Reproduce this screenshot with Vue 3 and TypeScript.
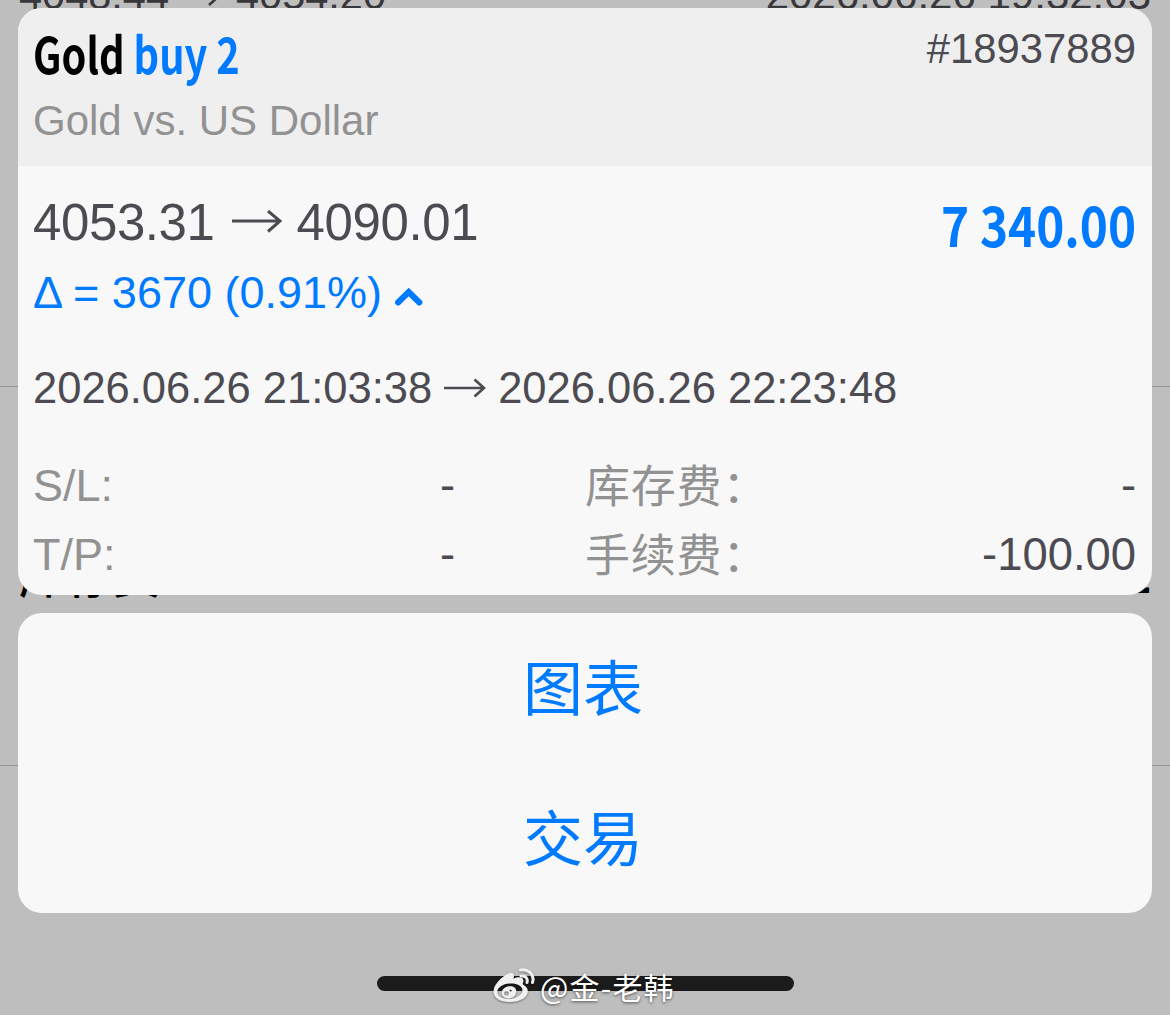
<script setup lang="ts">
interface DetailRow {
  label: string
  value: string
}

const details: DetailRow[] = [
  { label: 'S/L:', value: '-' },
  { label: '库存费：', value: '-' },
  { label: 'T/P:', value: '-' },
  { label: '手续费：', value: '-100.00' },
]

const actions: string[] = ['图表', '交易']
</script>

<template>
  <div class="screen">
    <div class="history" aria-hidden="true">
      <div class="past past-top">
        <span class="past-price">
          <span>4048.44</span>
          <svg class="past-arrow" width="40" height="22" viewBox="0 0 40 22">
            <path d="M0 13H37M28 5l9 8-9 8" />
          </svg>
          <span>4054.20</span>
        </span>
        <span class="past-date">2026.06.26 19:32:03</span>
      </div>
      <div class="divider first"></div>
      <div class="past past-fee">
        <span>库存费</span>
        <span class="past-dash">-</span>
      </div>
      <div class="divider second"></div>
    </div>

    <main class="sheet">
      <section class="card">
        <header class="head">
          <div>
            <div class="title">Gold <span class="side">buy 2</span></div>
            <div class="subtitle">Gold vs. US Dollar</div>
          </div>
          <div class="ticket">#18937889</div>
        </header>
        <div class="body">
          <div class="price-row">
            <div class="prices">
              <span>4053.31</span>
              <svg class="arrow" width="50" height="24" viewBox="0 0 50 24">
                <path d="M0 11H48M36 1l12 10-12 10.500" />
              </svg>
              <span>4090.01</span>
            </div>
            <div class="profit">7 340.00</div>
          </div>
          <div class="delta">
            <span>Δ = 3670 (0.91%)</span>
            <svg class="chevron" width="28" height="20" viewBox="0 0 28 20">
              <path d="M3 15.500L13.700 5l10.700 10.500" />
            </svg>
          </div>
          <div class="dates">
            <span>2026.06.26 21:03:38</span>
            <svg class="arrow small" width="42" height="22" viewBox="0 0 42 22">
              <path d="M0 11H40M30.500 2.500l9.500 8.500-9.500 8.500" />
            </svg>
            <span>2026.06.26 22:23:48</span>
          </div>
          <div class="details">
            <template v-for="row in details" :key="row.label">
              <span class="label">{{ row.label }}</span>
              <span class="value">{{ row.value }}</span>
            </template>
          </div>
        </div>
      </section>

      <section class="actions">
        <button v-for="action in actions" :key="action" type="button" class="action">
          {{ action }}
        </button>
      </section>
    </main>

    <footer class="home">
      <div class="home-bar"></div>
      <div class="mark">
        <svg class="weibo" width="44" height="38" viewBox="0 0 44 38">
          <path
            class="face"
            fill-rule="evenodd"
            d="M16.500 6.500c3-1.600 5.500-.8 5.500 2.200 0 1-.3 2-.6 3 4.500-2 9.600-2 10 1.500.2 2-1 3-.6 4 .5 1 5 2.200 5 7C35.800 30.500 28 35 17.500 35 8.500 35 1.500 31 1.500 24.500 1.500 18 9.500 9.500 16.500 6.500zM17.600 16.500C10.500 16.800 5 20.700 5.300 25.300c.3 4.500 6 7 13 6.600 7-.4 12.400-4.300 12.100-8.900-.3-4.500-5.800-6.900-12.800-6.500z"
          />
          <path
            class="face"
            fill-rule="evenodd"
            d="M15.500 19.500c4.500-1.200 8.800.8 8.800 4.800 0 4-3.300 7-7.300 7.200-4.500.2-7.500-2.300-7.300-5.700.2-3 2.700-5.500 5.800-6.300zM14.500 24.200a2.500 2.300 0 1 0 .1 4.600 2.500 2.300 0 0 0-.1-4.600zM18.600 22.800a1 1 0 1 0 .1 2 1 1 0 0 0-.1-2z"
          />
          <path class="wave" d="M29 9c4.300-.6 7.200 2.300 6 6.500M28.500 3c8-1.500 14.500 5 12 12.500" />
        </svg>
        <span>@金-老韩</span>
      </div>
    </footer>
  </div>
</template>

<style>
body {
  margin: 0;
  background: #bebebe;
}
</style>

<style scoped>
.screen {
  position: relative;
  box-sizing: border-box;
  width: 1170px;
  height: 1015px;
  overflow: hidden;
  padding: 8px 18px 0;
  background: #bebebe;
  color: #4c4b51;
  font-family: 'Liberation Sans', 'Noto Sans CJK SC', sans-serif;
  white-space: nowrap;
}

.history {
  position: absolute;
  inset: 0;
}

.past {
  position: absolute;
  left: 19px;
  right: 19px;
  display: flex;
  justify-content: space-between;
}

.past-top {
  top: -30px;
  font-size: 42px;
  line-height: 50px;
  color: #38373b;
}

.past-price {
  display: flex;
  align-items: center;
  font-size: 41.5px;
}

.past-arrow {
  margin: 0 15px 0 12px;
  fill: none;
  stroke: #38373b;
  stroke-width: 2.6;
}

.past-fee {
  top: 542px;
  font-size: 47px;
  font-weight: 500;
  line-height: 69px;
  color: #000;
}

.past-dash {
  margin-top: 9px;
  font-weight: 700;
}

.divider {
  position: absolute;
  left: 0;
  right: 0;
  height: 1px;
  background: #929292;
}

.first {
  top: 386px;
}

.second {
  top: 765px;
}

.sheet {
  position: relative;
  display: flex;
  flex-direction: column;
  gap: 18px;
}

.card,
.actions {
  overflow: hidden;
  border-radius: 24px;
  background: #f8f8f8;
}

.card {
  height: 587px;
}

.head {
  display: flex;
  justify-content: space-between;
  box-sizing: border-box;
  height: 158px;
  padding: 12px 16px 0 15px;
  background: #efefef;
}

.title {
  height: 64px;
  font: 700 50px/64px 'Noto Sans CJK SC', sans-serif;
  color: #000;
  transform: scaleX(0.795);
  transform-origin: left;
}

.side {
  color: #007aff;
}

.subtitle {
  margin-top: 10px;
  font-size: 42px;
  line-height: 54px;
  color: #929292;
}

.ticket {
  font-size: 41.8px;
  line-height: 58px;
}

.body {
  padding: 20px 16px 0 15px;
}

.price-row {
  display: flex;
  justify-content: space-between;
  height: 72px;
}

.prices,
.delta,
.dates {
  display: flex;
  align-items: center;
}

.prices {
  font-size: 51px;
  letter-spacing: -0.4px;
}

.arrow {
  margin: 0 15px 0 17px;
  fill: none;
  stroke: #4c4b51;
  stroke-width: 3;
}

.arrow.small {
  margin: 0 12px 0 12px;
  stroke-width: 2.6;
}

.profit {
  font: 700 55px/74px 'Noto Sans CJK SC', sans-serif;
  color: #007aff;
  transform: scaleX(0.867);
  transform-origin: right;
}

.delta {
  height: 69px;
  font-size: 45px;
  color: #007aff;
}

.chevron {
  margin: 8px 0 0 13px;
  fill: none;
  stroke: #007aff;
  stroke-width: 6;
  stroke-linecap: round;
}

.dates {
  height: 60px;
  margin-top: 31px;
  font-size: 43.5px;
}

.details {
  display: grid;
  grid-template-columns: 160px 262px 260px 1fr;
  grid-auto-rows: 69px;
  margin-top: 33px;
  font-size: 45px;
  line-height: 69px;
}

.label {
  color: #929292;
}

.label:nth-child(4n + 3) {
  padding: 2px 0 0 130px;
  letter-spacing: 0.8px;
}

.value {
  text-align: right;
  font-size: 45.4px;
}

.actions {
  display: flex;
  flex-direction: column;
  height: 300px;
}

.action {
  height: 150px;
  padding: 0 4px 6px 0;
  border: 0;
  background: none;
  font: 400 60px/144px 'Noto Sans CJK SC', sans-serif;
  color: #007aff;
}

.home {
  position: relative;
  display: flex;
  justify-content: center;
  padding-top: 63px;
}

.home-bar {
  width: 417px;
  height: 15px;
  border-radius: 8px;
  background: #1b1b1b;
}

.mark {
  position: absolute;
  top: 53px;
  left: 474px;
  display: flex;
  align-items: center;
  gap: 4px;
  font: 400 30px/40px 'Noto Sans CJK SC', sans-serif;
  letter-spacing: 1.2px;
  color: #fff;
  text-shadow: 0 1px 3px rgba(0, 0, 0, 0.6);
}

.weibo {
  filter: drop-shadow(0 1px 1px rgba(0, 0, 0, 0.4));
}

.face {
  fill: #f0f0f0;
}

.wave {
  fill: none;
  stroke: #f0f0f0;
  stroke-width: 3;
  stroke-linecap: round;
}
</style>
